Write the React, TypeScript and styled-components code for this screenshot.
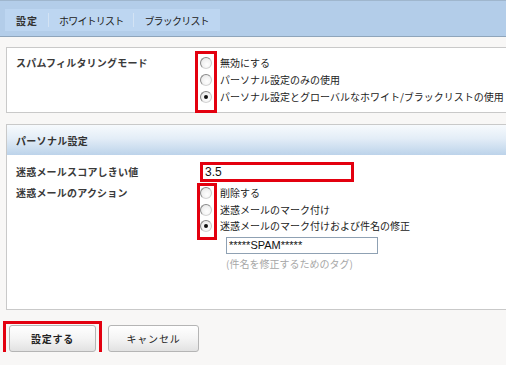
import React from 'react';
import styled, { createGlobalStyle } from 'styled-components';

const GlobalStyle = createGlobalStyle`
  html, body {
    margin: 0;
    padding: 0;
    background: #f8f7f6;
    overflow: hidden;
  }
  body {
    font-family: 'Noto Sans CJK JP', 'Noto Sans', sans-serif;
    font-size: 10px;
    color: #222;
  }
`;

const TopBar = styled.div`
  height: 37px;
  box-sizing: border-box;
  padding: 8px 0 0 5px;
  background: #b3cde9;
  border-bottom: 1px solid #8fa5bb;
  border-top: 1px solid #9fb6cd;
`;

const Tabs = styled.div`
  display: inline-flex;
  align-items: center;
  height: 22px;
  padding: 0 11px;
  background: #bdd6f1;
`;

const Tab = styled.span<{ $active?: boolean }>`
  font-size: 10px;
  font-weight: ${(p) => (p.$active ? 700 : 400)};
  color: ${(p) => (p.$active ? '#333' : '#222')};
  letter-spacing: ${(p) => (p.$active ? '1px' : '-0.8px')};
`;

const TabSep = styled.span`
  width: 1px;
  height: 14px;
  margin: 0 10px;
  background: #d3e3f4;
`;

const Main = styled.div`
  padding: 10px 0 0 6px;
`;

const Panel = styled.div<{ $gap?: number }>`
  width: 520px;
  margin-top: ${(p) => p.$gap ?? 0}px;
  background: #fff;
  border: 1px solid #c9c9c9;
  border-right: none;
`;

const PanelHead = styled.div`
  height: 30px;
  display: flex;
  align-items: center;
  padding-left: 9px;
  font-weight: 700;
  color: #333;
  letter-spacing: 0.3px;
  background: linear-gradient(#f7fafd 0%, #e3edf7 45%, #bcd3ea 100%);
`;

const PanelBody = styled.div<{ $pad: string }>`
  padding: ${(p) => p.$pad};
  display: flex;
  flex-direction: column;
`;

const Row = styled.div<{ $mt?: number }>`
  display: grid;
  grid-template-columns: 184px 1fr;
  margin-top: ${(p) => p.$mt ?? 0}px;
`;

const Label = styled.div<{ $h: number }>`
  height: ${(p) => p.$h}px;
  line-height: ${(p) => p.$h}px;
  font-weight: 700;
  color: #3a3a3a;
  letter-spacing: 0.2px;
`;

const Options = styled.div`
  display: flex;
`;

const Marked = styled.div<{ $inset: string }>`
  position: relative;
  &::after {
    content: '';
    position: absolute;
    inset: ${(p) => p.$inset};
    border: 3px solid #e3000f;
    pointer-events: none;
  }
`;

const RadioCol = styled.div<{ $row: number }>`
  display: flex;
  flex-direction: column;
  & > * {
    height: ${(p) => p.$row}px;
  }
`;

const RadioCell = styled.div`
  display: flex;
  align-items: center;
`;

const Radio = styled.input.attrs({ type: 'radio' })`
  appearance: none;
  margin: 0;
  width: 12px;
  height: 12px;
  border-radius: 50%;
  border: 1px solid #8a8a8a;
  border-right-color: #c9c9c9;
  border-bottom-color: #d4d4d4;
  background: radial-gradient(circle at 60% 65%, #ffffff 0%, #f1f1f1 55%, #dcdcdc 100%);
  box-sizing: border-box;
  display: grid;
  place-items: center;
  &:checked::before {
    content: '';
    width: 4px;
    height: 4px;
    border-radius: 50%;
    background: #111;
  }
`;

const TextCol = styled.div<{ $row: number }>`
  display: flex;
  flex-direction: column;
  padding-left: 8px;
  & > * {
    height: ${(p) => p.$row}px;
    line-height: ${(p) => p.$row}px;
    white-space: nowrap;
  }
`;

const ScoreInput = styled.input`
  width: 154px;
  height: 20px;
  box-sizing: border-box;
  margin: 0;
  padding: 0 0 0 2px;
  border: 3px solid #e3000f;
  font-family: 'Liberation Sans', sans-serif;
  font-size: 12px;
  color: #111;
  outline: none;
`;

const TagBlock = styled.div`
  display: flex;
  flex-direction: column;
  padding-left: 26px;
  margin-top: 2px;
`;

const TagInput = styled.input`
  width: 152px;
  height: 17px;
  box-sizing: border-box;
  margin: 0;
  padding: 0 2px;
  border: 1px solid #8fa1b3;
  font-family: 'Liberation Sans', sans-serif;
  font-size: 11px;
  color: #111;
  outline: none;
`;

const Hint = styled.div`
  margin-top: 2px;
  color: #a7a7a7;
`;

const Buttons = styled.div`
  display: flex;
  gap: 12px;
  margin: 15px 0 0 3px;
`;

const Button = styled.button<{ $primary?: boolean }>`
  height: 27px;
  width: ${(p) => (p.$primary ? 87 : 91)}px;
  border: 1px solid #b5b5b5;
  border-radius: 3px;
  background: linear-gradient(#ffffff 0%, #f4f4f4 50%, #e2e2e2 100%);
  font-family: 'Noto Sans CJK JP', sans-serif;
  font-size: 10px;
  font-weight: ${(p) => (p.$primary ? 700 : 400)};
  color: #222;
  letter-spacing: 0.8px;
  padding: 0;
  cursor: pointer;
`;

const modes = [
  '無効にする',
  'パーソナル設定のみの使用',
  'パーソナル設定とグローバルなホワイト/ブラックリストの使用',
];

const actions = ['削除する', '迷惑メールのマーク付け', '迷惑メールのマーク付けおよび件名の修正'];

const App: React.FC = () => {
  return (
    <>
      <GlobalStyle />
      <TopBar>
        <Tabs>
          <Tab $active>設定</Tab>
          <TabSep />
          <Tab>ホワイトリスト</Tab>
          <TabSep />
          <Tab>ブラックリスト</Tab>
        </Tabs>
      </TopBar>
      <Main>
        <Panel>
          <PanelBody $pad="6px 0 7px 9px">
            <Row>
              <Label $h={17}>スパムフィルタリングモード</Label>
              <Options>
                <Marked $inset="-3px -5px -8px -5px">
                  <RadioCol $row={17}>
                    {modes.map((m, i) => (
                      <RadioCell key={m}>
                        <Radio name="mode" defaultChecked={i === 2} />
                      </RadioCell>
                    ))}
                  </RadioCol>
                </Marked>
                <TextCol $row={17}>
                  {modes.map((m) => (
                    <span key={m}>{m}</span>
                  ))}
                </TextCol>
              </Options>
            </Row>
          </PanelBody>
        </Panel>

        <Panel $gap={11}>
          <PanelHead>パーソナル設定</PanelHead>
          <PanelBody $pad="7px 0 38px 9px">
            <Row>
              <Label $h={20}>迷惑メールスコアしきい値</Label>
              <div>
                <ScoreInput defaultValue="3.5" />
              </div>
            </Row>
            <Row $mt={3}>
              <Label $h={16}>迷惑メールのアクション</Label>
              <div>
                <Options>
                  <Marked $inset="-2px -5px -5px -3px">
                    <RadioCol $row={16.5}>
                      {actions.map((a, i) => (
                        <RadioCell key={a}>
                          <Radio name="action" defaultChecked={i === 2} />
                        </RadioCell>
                      ))}
                    </RadioCol>
                  </Marked>
                  <TextCol $row={16.5}>
                    {actions.map((a) => (
                      <span key={a}>{a}</span>
                    ))}
                  </TextCol>
                </Options>
                <TagBlock>
                  <TagInput defaultValue="*****SPAM*****" />
                  <Hint>(件名を修正するためのタグ)</Hint>
                </TagBlock>
              </div>
            </Row>
          </PanelBody>
        </Panel>

        <Buttons>
          <Marked $inset="-4px -6px -6px -6px">
            <Button $primary>設定する</Button>
          </Marked>
          <Button>キャンセル</Button>
        </Buttons>
      </Main>
    </>
  );
};

export default App;
